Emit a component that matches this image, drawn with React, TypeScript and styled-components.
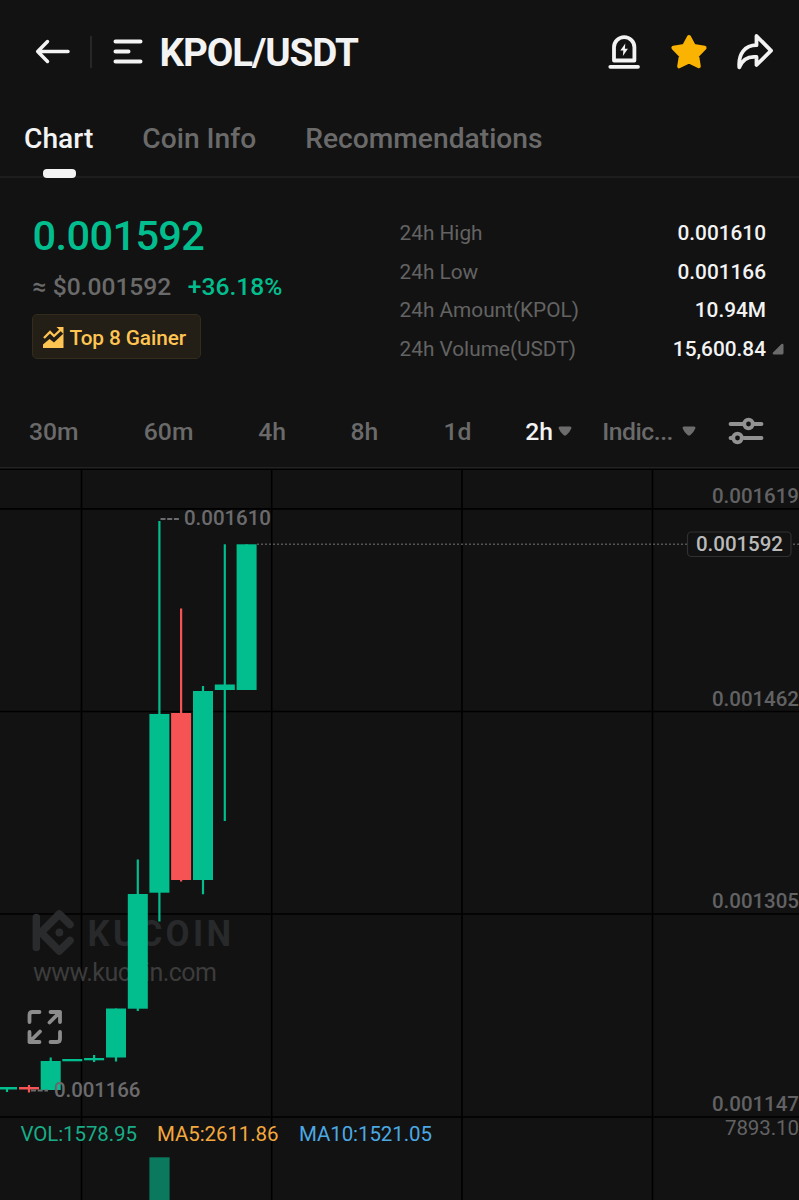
import React from "react";
import styled, { createGlobalStyle } from "styled-components";

const green = "#02be8e";
const red = "#f65454";
const white = "#f3f3f3";
const muted = "#6a6a6a";

const GlobalStyle = createGlobalStyle`
  * { box-sizing: border-box; }
  body { margin: 0; background: #121212; }
`;

const Page = styled.main`
  width: 799px;
  height: 1200px;
  overflow: hidden;
  display: flex;
  flex-direction: column;
  background: #121212;
  color: ${white};
  font-family: Roboto, "Liberation Sans", sans-serif;
`;

const Header = styled.header`
  display: flex;
  align-items: center;
  height: 103px;
  padding: 0 26px 0 35px;
`;

const Divider = styled.span`
  width: 2px;
  height: 32px;
  margin: 0 20px 0 20px;
  background: #272727;
`;

const Title = styled.h1`
  margin: 0 auto 0 16.5px;
  padding-top: 2px;
  font-size: 38.6px;
  font-weight: 700;
  line-height: 46px;
  letter-spacing: -1.1px;
`;

const Actions = styled.div`
  display: flex;
  align-items: center;
  gap: 28.5px;
`;

const Tabs = styled.nav`
  display: flex;
  gap: 49px;
  height: 75px;
  padding: 17px 24px 0;
  border-bottom: 2px solid #1d1d1d;
`;

const Tab = styled.span<{ $active?: boolean }>`
  position: relative;
  padding-top: 1px;
  font-size: 28.2px;
  font-weight: 500;
  line-height: 36px;
  color: ${(p) => (p.$active ? white : muted)};
`;

const TabMark = styled.i`
  position: absolute;
  left: 50%;
  top: 49px;
  width: 33px;
  height: 9px;
  margin-left: -16px;
  border-radius: 4px;
  background: ${white};
`;

const Summary = styled.section`
  display: flex;
  height: 217px;
  padding: 34px 15px 0 32px;
`;

const PriceColumn = styled.div`
  width: 367.5px;
  display: flex;
  flex-direction: column;
  align-items: flex-start;
`;

const Price = styled.div`
  padding-left: 0.5px;
  font-size: 41.5px;
  font-weight: 500;
  line-height: 48px;
  letter-spacing: -0.6px;
  color: ${green};
`;

const SubPrice = styled.div`
  display: flex;
  gap: 16.5px;
  margin-top: 9px;
  padding-left: 0.5px;
  font-size: 24.6px;
  font-weight: 500;
  line-height: 36px;
  color: ${muted};
`;

const Change = styled.span`
  color: ${green};
`;

const Badge = styled.div`
  display: flex;
  align-items: center;
  gap: 5.5px;
  width: 169px;
  height: 45px;
  margin-top: 9px;
  padding: 2px 10px 0;
  border: 1px solid #332b1c;
  border-radius: 5px;
  background: #231e16;
  color: #ffc552;
  font-size: 20.8px;
  font-weight: 500;
  letter-spacing: -0.1px;
  white-space: nowrap;
`;

const Stats = styled.dl`
  flex: 1;
  margin: 2px 0 0;
`;

const StatRow = styled.div`
  display: flex;
  align-items: center;
  height: 38.5px;
  font-size: 20.8px;
`;

const StatLabel = styled.dt`
  flex: 1;
  color: #636363;
`;

const StatValue = styled.dd`
  margin: 0;
  font-weight: 500;
`;

const StatMark = styled.span`
  display: flex;
  width: 18px;
  padding-left: 5.5px;
`;

const Intervals = styled.nav`
  display: flex;
  align-items: center;
  height: 73px;
  padding: 0 35px 0 29px;
  border-bottom: 1px solid #232323;
  font-size: 24.7px;
  font-weight: 500;
  color: ${muted};
`;

const Interval = styled.span<{ $w: number; $active?: boolean; $gap?: number; $tight?: boolean }>`
  display: flex;
  align-items: center;
  gap: ${(p) => p.$gap ?? 5}px;
  width: ${(p) => p.$w}px;
  letter-spacing: ${(p) => (p.$tight ? "-0.45px" : "normal")};
  white-space: nowrap;
  color: ${(p) => (p.$active ? white : muted)};
`;

const Chart = styled.svg`
  display: block;
  flex: none;
  margin-top: 1px;
  font-family: Roboto, "Liberation Sans", sans-serif;
`;

const Line = styled.svg`
  display: block;
  flex: none;
  fill: none;
  stroke: ${white};
  stroke-width: 4;
  stroke-linecap: round;
  stroke-linejoin: round;
`;

const Solid = styled.svg`
  display: block;
  flex: none;
`;

const Caret = () => (
  <Solid width="14" height="10" viewBox="0 0 14 10">
    <path d="M2 .5h10q2 0 1.3 2Q11.5 7 8.2 9.2 7 10 5.8 9.2 2.5 7 .7 2.5 0 .5 2 .5Z" fill="#6c6c6c" />
  </Solid>
);

// Each candle: left edge, body top, body bottom, wick top, wick bottom
type Candle = { x: number; top: number; bottom: number; high: number; low: number; down?: boolean };
const candles: Candle[] = [
  { x: -3, top: 1087, bottom: 1089.5, high: 1087, low: 1092 },
  { x: 19, top: 1087, bottom: 1089.5, high: 1085, low: 1092.5, down: true },
  { x: 40.7, top: 1061, bottom: 1090, high: 1057.5, low: 1090 },
  { x: 62.3, top: 1059, bottom: 1061.3, high: 1059, low: 1061 },
  { x: 84.1, top: 1058, bottom: 1060.3, high: 1055, low: 1062 },
  { x: 106, top: 1008.5, bottom: 1057.5, high: 1008.5, low: 1061.5 },
  { x: 127.8, top: 894, bottom: 1008.7, high: 859.5, low: 1011 },
  { x: 149.4, top: 714, bottom: 892.7, high: 521, low: 921.5 },
  { x: 171.1, top: 713, bottom: 880, high: 608.5, low: 881.5, down: true },
  { x: 193, top: 691, bottom: 880, high: 686, low: 894.3 },
  { x: 214.8, top: 684.5, bottom: 690, high: 544.3, low: 821 },
  { x: 236.6, top: 544.3, bottom: 690, high: 544.3, low: 690 },
];
const columns = [81.5, 271.7, 462, 652.5];
const rows = [469.3, 508.9, 711.5, 914, 1117];
const scale = [
  { y: 503, label: "0.001619" },
  { y: 706, label: "0.001462" },
  { y: 908, label: "0.001305" },
  { y: 1110.5, label: "0.001147" },
];

const PriceChart = () => (
  <Chart width="799" height="731" viewBox="0 469 799 731" fontSize="20.5" fontWeight="500">
    <g stroke="#000" strokeWidth="1.6">
      {columns.map((x) => <path key={x} d={`M${x} 469V1200`} />)}
      {rows.map((y) => <path key={y} d={`M0 ${y}H799`} />)}
    </g>

    <g stroke="#2a2b2c" fill="none" strokeWidth="7.5" strokeLinejoin="round" strokeLinecap="round">
      <path d="M36.3 917.5V947.5" />
      <path d="M70 924.5 59.3 914 41 932.5 59.3 951 70 940.5" />
      <circle cx="59.4" cy="932.5" r="3.9" fill="#2a2b2c" stroke="none" />
    </g>
    <text transform="translate(87.5 946) scale(.93 1)" fontSize="37.5" fontWeight="700" fill="#28292a" textLength="154.5">KUCOIN</text>
    <text x="33" y="980.5" fontSize="25" fontWeight="400" fill="#3c3c3c" textLength="184">www.kucoin.com</text>

    {candles.map((c) => (
      <g key={c.x} fill={c.down ? red : green}>
        <rect x={c.x + 8.9} y={c.high} width="2.2" height={c.low - c.high} />
        <rect x={c.x} y={c.top} width="20" height={c.bottom - c.top} />
      </g>
    ))}
    <rect x="149.4" y="1157.3" width="20.2" height="43" fill="#0a795d" />

    <g fill="#6b6b6e">
      <path d="M160.5 519H179.5M31 1090.5H48" stroke="#6b6b6e" strokeWidth="2" strokeDasharray="5 1.7" />
      <text x="184" y="525" textLength="87">0.001610</text>
      <text x="54" y="1096.5" textLength="86.5">0.001166</text>
    </g>
    <g fill="#626264">
      {scale.map((s) => <text key={s.y} x="712" y={s.y} textLength="87">{s.label}</text>)}
      <text x="725" y="1135" fontWeight="400" textLength="74">7893.10</text>
    </g>

    <path d="M257 544.3H799" stroke="#555" strokeWidth="1.6" strokeDasharray="2 2" />
    <rect x="687.5" y="532" width="103.5" height="24.5" rx="4" fill="#121212" stroke="#303030" strokeWidth="1.2" />
    <text x="696" y="550.5" fill="#bababa" textLength="87">0.001592</text>

    <g fill="none" stroke="#8c8c8c" strokeWidth="3.8" strokeLinecap="round" strokeLinejoin="round">
      <path d="M29.5 1022V1015Q29.5 1012 32.5 1012H39.5M50.5 1012H60V1022M60 1012 49.5 1022.5M60 1032V1039Q60 1042 57 1042H50.5M39.5 1042H29.5V1032M29.5 1042 40 1031.5" />
    </g>

    <g fontSize="20.5" fontWeight="400">
      <text x="20.5" y="1141" fill="#18ad86" textLength="116.5">VOL:1578.95</text>
      <text x="157" y="1141" fill="#f5a83d" textLength="121.5">MA5:2611.86</text>
      <text x="299" y="1141" fill="#4ba9e4" textLength="133">MA10:1521.05</text>
    </g>
  </Chart>
);

export default function App() {
  return (
    <Page>
      <GlobalStyle />
      <Header>
        <Line width="35" height="26" viewBox="0 0 35 26">
          <path d="M33 12.5H3M12.5 2.5 2.7 12.5 12.5 22.5" strokeWidth="3.5" />
        </Line>
        <Divider />
        <Line width="31" height="26" viewBox="0 0 31 26">
          <path d="M3.5 2.5H28.5M3.5 12.5H16.5M3.5 22.5H28.5" />
        </Line>
        <Title>KPOL/USDT</Title>
        <Actions>
          <Line width="34" height="36" viewBox="0 0 34 36">
            <path d="M7 26.5V13.3a10.2 10.2 0 0 1 20.4 0V26.5ZM3.3 32.8H31" strokeWidth="3.8" />
            <path d="m18.3 9.5-5 7h3L15.9 22l5-7.2h-3Z" fill={white} stroke="none" />
          </Line>
          <Solid width="38" height="36" viewBox="0 0 38 36">
            <path d="M19 3 23.8 12 34.6 13.8 27.1 21.5 28.8 32.3 19 27.5 9.2 32.3 10.9 21.5 3.4 13.8 14.2 12Z" fill="#fab300" stroke="#fab300" strokeWidth="4" strokeLinejoin="round" />
          </Solid>
          <Line width="37" height="38" viewBox="0 0 37 38">
            <path d="M20.5 3 35 17.7 20.5 32V24C12 23 6.5 26.5 3.3 34.3 2.2 20.5 9 12.2 20.5 12.2Z" strokeWidth="3.8" />
          </Line>
        </Actions>
      </Header>

      <Tabs>
        <Tab $active>Chart<TabMark /></Tab>
        <Tab>Coin Info</Tab>
        <Tab>Recommendations</Tab>
      </Tabs>

      <Summary>
        <PriceColumn>
          <Price>0.001592</Price>
          <SubPrice>
            <span>≈ $0.001592</span>
            <Change>+36.18%</Change>
          </SubPrice>
          <Badge>
            <Solid width="21" height="22" viewBox="0 0 21 22" fill="#ffc552">
              <path d="M0 17.5 6.5 12 11 15.5 20.5 6.5V21H0Z" />
              <path d="M1 11 7 5 11 9 18.5 2" fill="none" stroke="#231e16" strokeWidth="5" />
              <path d="M1 11 7 5 11 9 18.5 2" fill="none" stroke="#ffc552" strokeWidth="2.3" />
              <path d="M13.5 0H20.5V7Z" />
            </Solid>
            Top 8 Gainer
          </Badge>
        </PriceColumn>
        <Stats>
          <StatRow><StatLabel>24h High</StatLabel><StatValue>0.001610</StatValue><StatMark /></StatRow>
          <StatRow><StatLabel>24h Low</StatLabel><StatValue>0.001166</StatValue><StatMark /></StatRow>
          <StatRow><StatLabel>24h Amount(KPOL)</StatLabel><StatValue>10.94M</StatValue><StatMark /></StatRow>
          <StatRow>
            <StatLabel>24h Volume(USDT)</StatLabel>
            <StatValue>15,600.84</StatValue>
            <StatMark>
              <Solid width="12" height="12" viewBox="0 0 12 12">
                <path d="M1 9.5 9.5 1Q11.5 0 11.5 2V10Q11.5 11.5 10 11.5H1.5Q0 11 1 9.5Z" fill="#6b6b6b" />
              </Solid>
            </StatMark>
          </StatRow>
        </Stats>
      </Summary>

      <Intervals>
        <Interval $w={115}>30m</Interval>
        <Interval $w={114.5}>60m</Interval>
        <Interval $w={92.5}>4h</Interval>
        <Interval $w={93}>8h</Interval>
        <Interval $w={82}>1d</Interval>
        <Interval $w={77} $active>2h<Caret /></Interval>
        <Interval $w={126} $gap={8.5} $tight>Indic...<Caret /></Interval>
        <Line width="36" height="28" viewBox="0 0 36 28">
          <g stroke="#929292" strokeWidth="3.8">
            <path d="M2.5 7H15M26 7H33.5M2.5 21H5M16 21H33.5" />
            <circle cx="20.5" cy="7" r="4.3" />
            <circle cx="9.5" cy="21" r="4.3" />
          </g>
        </Line>
      </Intervals>

      <PriceChart />
    </Page>
  );
}
